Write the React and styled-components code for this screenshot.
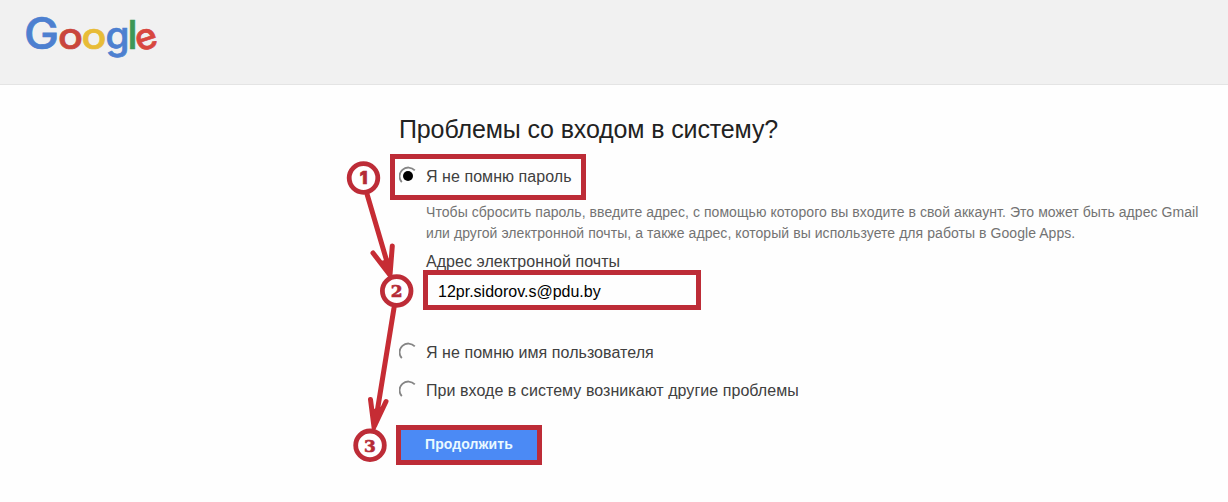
import styled, { createGlobalStyle, css } from "styled-components";

const GlobalStyle = createGlobalStyle`
  body {
    margin: 0;
    background: #fefefe;
    font-family: "Liberation Sans", Arial, sans-serif;
  }
`;

const Page = styled.div`
  position: relative;
  height: 502px;
  overflow: hidden;
`;

const TopBar = styled.header`
  box-sizing: border-box;
  height: 85px;
  padding: 0 20px;
  background: #f1f1f1;
  border-bottom: 1px solid #e4e4e4;
`;

const Logo = styled.svg`
  display: block;
  overflow: visible;
  font-family: Inter, sans-serif;
`;

const Form = styled.main`
  display: flex;
  flex-direction: column;
  align-items: flex-start;
  padding: 29px 0 0 399px;
`;

const Text = styled.span`
  display: block;
  white-space: nowrap;
  color: #404040;
  font-size: 16px;
  line-height: 20px;
  letter-spacing: 0.05px;
`;

const Title = styled.h1`
  margin: 0;
  font-size: 25px;
  font-weight: 400;
  line-height: 30px;
  letter-spacing: -0.13px;
  white-space: nowrap;
  color: #222;
`;

const RadioIcon = styled.svg`
  flex: none;
  margin-right: 9px;
`;

const Option = styled.label`
  box-sizing: border-box;
  display: flex;
  align-items: center;
  height: 38px;
  ${RadioIcon} {
    margin-top: -2px;
  }
  ${({ marked }) => {
    if (marked) {
      return css`
        width: 196px;
        height: 46px;
        margin: 10px 0 0 -9px;
        padding-left: 4px;
        border: 5px solid #bd2c37;
      `;
    }
  }};
`;

const Details = styled.section`
  display: flex;
  flex-direction: column;
  padding: 2px 0 24px 27px;
`;

const Hint = styled(Text)`
  color: #737373;
  font-size: 14px;
  line-height: 21px;
  letter-spacing: 0.06px;
`;

const FieldLabel = styled(Text)`
  margin-top: 8px;
`;

const Field = styled.div`
  box-sizing: border-box;
  display: flex;
  align-items: center;
  width: 278px;
  height: 40px;
  margin: -2px 0 0 -3px;
  padding: 3px 0 0 10px;
  border: 5px solid #bd2c37;
`;

const FieldValue = styled(Text)`
  color: #000;
  letter-spacing: 0;
`;

const Button = styled.button`
  box-sizing: border-box;
  width: 146px;
  height: 40px;
  margin: 15px 0 0 -3px;
  padding: 0 0 2px;
  border: 5px solid #bd2c37;
  background: #4b8af5;
  color: #e9f9ff;
  font-family: inherit;
  font-size: 14px;
  font-weight: 700;
  letter-spacing: 0.1px;
`;

const Steps = styled.svg`
  position: absolute;
  top: 0;
  left: 0;
  pointer-events: none;
`;

const letters = [
  { char: "G", x: 4, size: 44, width: 35, color: "#4d80d0" },
  { char: "o", x: 38, size: 37, width: 25, color: "#c9463c" },
  { char: "o", x: 61.5, size: 37, width: 25, color: "#e8bc37" },
  { char: "g", x: 85.5, size: 38, width: 24, color: "#4d80d0" },
  { char: "l", x: 107.5, size: 40, width: 10, color: "#3c9757" },
  { char: "e", x: 115, size: 36, width: 22, color: "#d8473f", rotate: -18 },
];

const steps = [
  { n: 1, x: 363.5, y: 178 },
  { n: 2, x: 396.7, y: 291 },
  { n: 3, x: 370, y: 445.3 },
];

function Radio({ checked }) {
  return (
    <RadioIcon width="18" height="20" viewBox="0 0 18 20">
      <path
        d="M2.8 16.2 A7.8 7.8 0 0 1 15.8 4.4"
        fill="none"
        stroke="#858585"
        strokeWidth="1.8"
      />
      {checked && <circle cx="9" cy="10" r="5" fill="#000" />}
    </RadioIcon>
  );
}

function GoogleLogo() {
  return (
    <Logo width="150" height="80">
      {letters.map(({ char, x, size, width, color, rotate }, i) => (
        <text
          key={i}
          x={x}
          y="49"
          fill={color}
          stroke={color}
          strokeWidth="0.7"
          fontSize={size}
          fontWeight="500"
          textLength={width}
          lengthAdjust="spacingAndGlyphs"
          transform={rotate ? `rotate(${rotate} ${x + width / 2} 39)` : undefined}
        >
          {char}
        </text>
      ))}
    </Logo>
  );
}

function StepMarks() {
  return (
    <Steps width="1228" height="502">
      <g stroke="#c62c34" strokeWidth="5" strokeLinecap="round" fill="none">
        <path d="M367 194 L390 272 M373 253 L390 275 L392.3 246" />
        <path d="M394 308 L375 425 M370.5 399.5 L374 427 L386 401.5" />
      </g>
      <path d="M381 261 L391 258 L391 276 Z M371 410 L383 406 L374 427 Z" fill="#c62c34" />
      {steps.map(({ n, x, y }) => (
        <g key={n}>
          <circle cx={x} cy={y} r="14.3" fill="#fff" stroke="#bd2c37" strokeWidth="4.8" />
          <text
            x={x}
            y={y + 6.3}
            fill="#b52b36"
            stroke="#b52b36"
            strokeWidth="0.6"
            fontFamily={n === 1 ? "Inter" : "DejaVu Serif"}
            fontSize="17"
            fontWeight={n === 1 ? 900 : 700}
            textAnchor="middle"
          >
            {n}
          </text>
        </g>
      ))}
    </Steps>
  );
}

function App() {
  return (
    <Page>
      <GlobalStyle />
      <TopBar>
        <GoogleLogo />
      </TopBar>
      <Form>
        <Title>Проблемы со входом в систему?</Title>
        <Option marked>
          <Radio checked />
          <Text>Я не помню пароль</Text>
        </Option>
        <Details>
          <Hint>
            Чтобы сбросить пароль, введите адрес, с помощью которого вы входите
            в свой аккаунт. Это может быть адрес Gmail
          </Hint>
          <Hint>
            или другой электронной почты, а также адрес, который вы используете
            для работы в Google Apps.
          </Hint>
          <FieldLabel>Адрес электронной почты</FieldLabel>
          <Field>
            <FieldValue>12pr.sidorov.s@pdu.by</FieldValue>
          </Field>
        </Details>
        <Option>
          <Radio />
          <Text>Я не помню имя пользователя</Text>
        </Option>
        <Option>
          <Radio />
          <Text>При входе в систему возникают другие проблемы</Text>
        </Option>
        <Button>Продолжить</Button>
      </Form>
      <StepMarks />
    </Page>
  );
}

export default App;
